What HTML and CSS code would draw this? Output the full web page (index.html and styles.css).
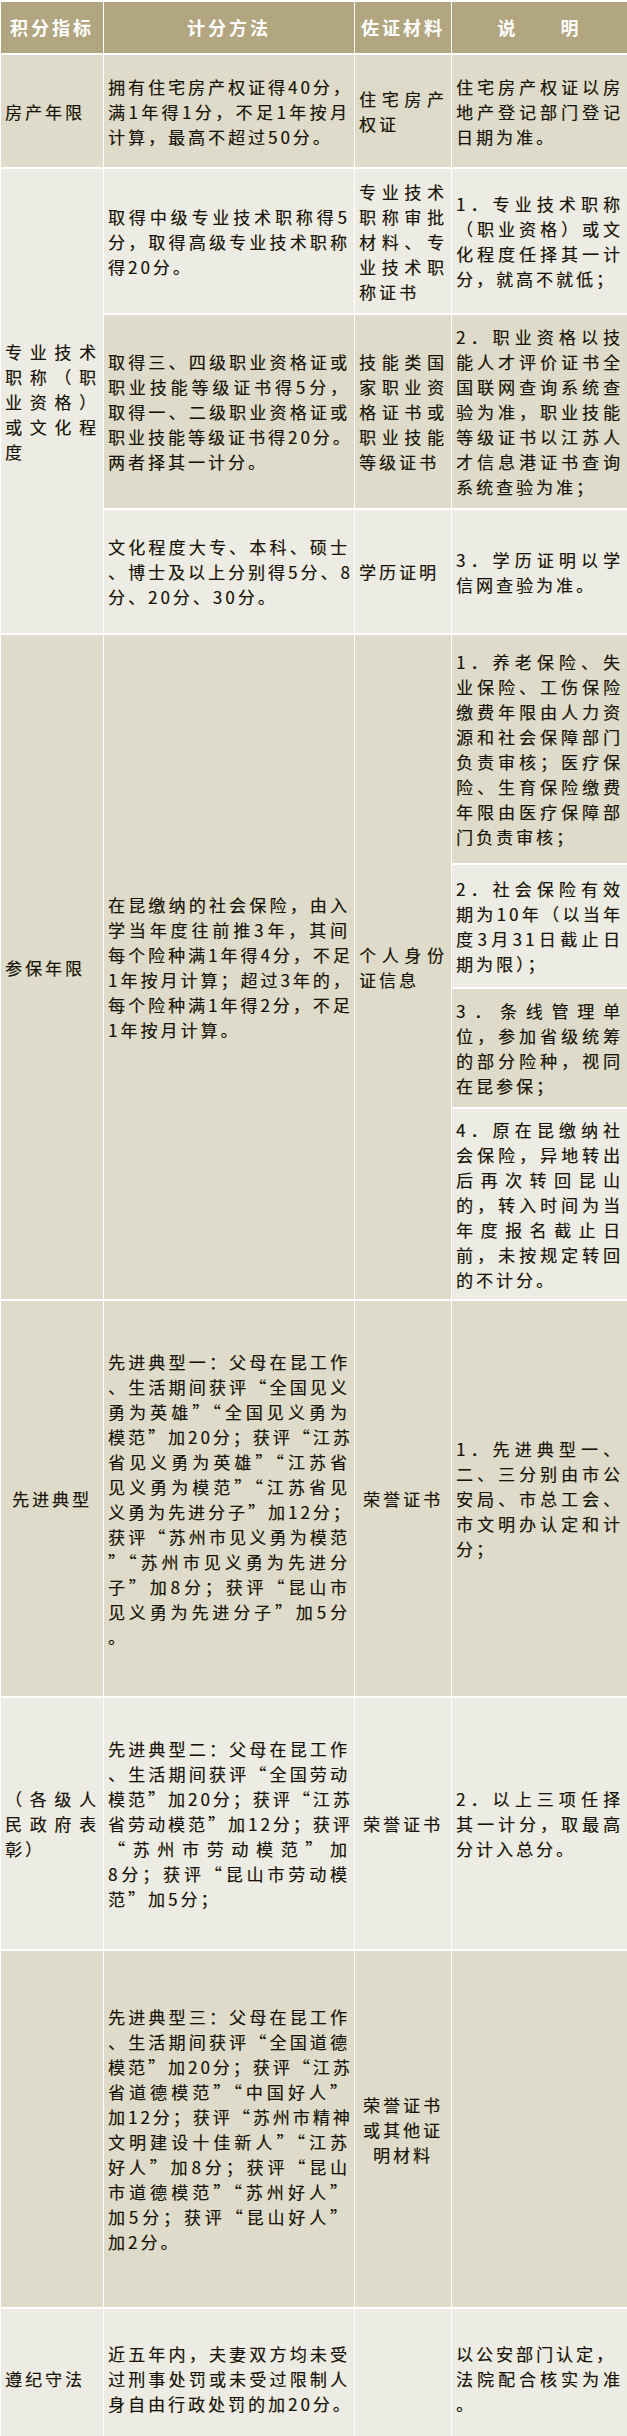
FILE: index.html
```html
<!DOCTYPE html>
<html lang="zh-CN">
<head>
<meta charset="utf-8">
<title>积分指标</title>
<link rel="stylesheet" href="styles.css">
</head>
<body>
<table class="score">
  <colgroup><col class="c1"><col class="c2"><col class="c3"><col class="c4"></colgroup>
  <thead>
    <tr class="r-head"><th>积分指标</th><th>计分方法</th><th>佐证材料</th><th>说　　明</th></tr>
  </thead>
  <tbody>
    <tr class="r-house dark">
      <td><span class="l e">房产年限</span></td>
      <td><span class="l">拥有住宅房产权证得40分，</span><span class="l">满1年得1分，不足1年按月</span><span class="l e">计算，最高不超过50分。</span></td>
      <td><span class="l">住宅房产</span><span class="l e">权证</span></td>
      <td><span class="l">住宅房产权证以房</span><span class="l">地产登记部门登记</span><span class="l e">日期为准。</span></td>
    </tr>
    <tr class="r-pro1">
      <td rowspan="3" class="light"><span class="l">专业技术</span><span class="l">职称（职</span><span class="l">业资格）</span><span class="l">或文化程</span><span class="l e">度</span></td>
      <td class="light"><span class="l">取得中级专业技术职称得5</span><span class="l">分，取得高级专业技术职称</span><span class="l e">得20分。</span></td>
      <td class="light"><span class="l">专业技术</span><span class="l">职称审批</span><span class="l">材料、专</span><span class="l">业技术职</span><span class="l e">称证书</span></td>
      <td class="light"><span class="l">1．专业技术职称</span><span class="l">（职业资格）或文</span><span class="l">化程度任择其一计</span><span class="l e">分，就高不就低；</span></td>
    </tr>
    <tr class="r-pro2 dark">
      <td><span class="l">取得三、四级职业资格证或</span><span class="l">职业技能等级证书得5分，</span><span class="l">取得一、二级职业资格证或</span><span class="l">职业技能等级证书得20分。</span><span class="l e">两者择其一计分。</span></td>
      <td><span class="l">技能类国</span><span class="l">家职业资</span><span class="l">格证书或</span><span class="l">职业技能</span><span class="l e">等级证书</span></td>
      <td><span class="l">2．职业资格以技</span><span class="l">能人才评价证书全</span><span class="l">国联网查询系统查</span><span class="l">验为准，职业技能</span><span class="l">等级证书以江苏人</span><span class="l">才信息港证书查询</span><span class="l e">系统查验为准；</span></td>
    </tr>
    <tr class="r-pro3 light">
      <td><span class="l">文化程度大专、本科、硕士</span><span class="l">、博士及以上分别得5分、8</span><span class="l e">分、20分、30分。</span></td>
      <td><span class="l e">学历证明</span></td>
      <td><span class="l">3．学历证明以学</span><span class="l e">信网查验为准。</span></td>
    </tr>
    <tr class="r-ins1">
      <td rowspan="4" class="dark"><span class="l e">参保年限</span></td>
      <td rowspan="4" class="dark"><span class="l">在昆缴纳的社会保险，由入</span><span class="l">学当年度往前推3年，其间</span><span class="l">每个险种满1年得4分，不足</span><span class="l">1年按月计算；超过3年的，</span><span class="l">每个险种满1年得2分，不足</span><span class="l e">1年按月计算。</span></td>
      <td rowspan="4" class="dark"><span class="l">个人身份</span><span class="l e">证信息</span></td>
      <td class="dark"><span class="l">1．养老保险、失</span><span class="l">业保险、工伤保险</span><span class="l">缴费年限由人力资</span><span class="l">源和社会保障部门</span><span class="l">负责审核；医疗保</span><span class="l">险、生育保险缴费</span><span class="l">年限由医疗保障部</span><span class="l e">门负责审核；</span></td>
    </tr>
    <tr class="r-ins2">
      <td class="light"><span class="l">2．社会保险有效</span><span class="l">期为10年（以当年</span><span class="l">度3月31日截止日</span><span class="l e">期为限）；</span></td>
    </tr>
    <tr class="r-ins3">
      <td class="dark"><span class="l">3．条线管理单</span><span class="l">位，参加省级统筹</span><span class="l">的部分险种，视同</span><span class="l e">在昆参保；</span></td>
    </tr>
    <tr class="r-ins4">
      <td class="light"><span class="l">4．原在昆缴纳社</span><span class="l">会保险，异地转出</span><span class="l">后再次转回昆山</span><span class="l">的，转入时间为当</span><span class="l">年度报名截止日</span><span class="l">前，未按规定转回</span><span class="l e">的不计分。</span></td>
    </tr>
    <tr class="r-adv1 dark">
      <td class="ctr"><span class="l e">先进典型</span></td>
      <td><span class="l">先进典型一：父母在昆工作</span><span class="l">、生活期间获评“全国见义</span><span class="l">勇为英雄”“全国见义勇为</span><span class="l">模范”加20分；获评“江苏</span><span class="l">省见义勇为英雄”“江苏省</span><span class="l">见义勇为模范”“江苏省见</span><span class="l">义勇为先进分子”加12分；</span><span class="l">获评“苏州市见义勇为模范</span><span class="l">”“苏州市见义勇为先进分</span><span class="l">子”加8分；获评“昆山市</span><span class="l">见义勇为先进分子”加5分</span><span class="l e">。</span></td>
      <td class="ctr"><span class="l e">荣誉证书</span></td>
      <td><span class="l">1．先进典型一、</span><span class="l">二、三分别由市公</span><span class="l">安局、市总工会、</span><span class="l">市文明办认定和计</span><span class="l e">分；</span></td>
    </tr>
    <tr class="r-adv2 light">
      <td><span class="l">（各级人</span><span class="l">民政府表</span><span class="l e">彰）</span></td>
      <td><span class="l">先进典型二：父母在昆工作</span><span class="l">、生活期间获评“全国劳动</span><span class="l">模范”加20分；获评“江苏</span><span class="l">省劳动模范”加12分；获评</span><span class="l">“苏州市劳动模范”加</span><span class="l">8分；获评“昆山市劳动模</span><span class="l e">范”加5分；</span></td>
      <td class="ctr"><span class="l e">荣誉证书</span></td>
      <td><span class="l">2．以上三项任择</span><span class="l">其一计分，取最高</span><span class="l e">分计入总分。</span></td>
    </tr>
    <tr class="r-adv3 dark">
      <td></td>
      <td><span class="l">先进典型三：父母在昆工作</span><span class="l">、生活期间获评“全国道德</span><span class="l">模范”加20分；获评“江苏</span><span class="l">省道德模范”“中国好人”</span><span class="l">加12分；获评“苏州市精神</span><span class="l">文明建设十佳新人”“江苏</span><span class="l">好人”加8分；获评“昆山</span><span class="l">市道德模范”“苏州好人”</span><span class="l">加5分；获评“昆山好人”</span><span class="l e">加2分。</span></td>
      <td class="ctr"><span class="l e">荣誉证书</span><span class="l e">或其他证</span><span class="l e">明材料</span></td>
      <td></td>
    </tr>
    <tr class="r-law light">
      <td><span class="l e">遵纪守法</span></td>
      <td><span class="l">近五年内，夫妻双方均未受</span><span class="l">过刑事处罚或未受过限制人</span><span class="l e">身自由行政处罚的加20分。</span></td>
      <td></td>
      <td><span class="l e">以公安部门认定，</span><span class="l">法院配合核实为准</span><span class="l e">。</span></td>
    </tr>
  </tbody>
</table>
</body>
</html>
```
FILE: styles.css
```css
html, body {
  margin: 0;
  padding: 0;
  background: #ffffff;
}

body {
  font-family: "Noto Sans CJK SC", "Liberation Sans", sans-serif;
  font-size: 17px;
  line-height: 25px;
  letter-spacing: 3px;
  color: #15130c;
}

.score {
  border-collapse: collapse;
  table-layout: fixed;
  width: 627px;
}

.c1 { width: 103px; }
.c2 { width: 251px; }
.c3 { width: 97px; }
.c4 { width: 176px; }

.score th,
.score td {
  border-top: 2px solid #ffffff;
  border-bottom: 2px solid #ffffff;
  border-left: 1px solid #ffffff;
  border-right: 1px solid #ffffff;
  padding: 0 4px;
  vertical-align: middle;
  text-align: left;
}

.score td {
  text-shadow: 0.4px 0.4px 0 rgba(110, 95, 30, 0.55);
}

.score th {
  background: #b2a681;
  color: #ffffff;
  font-size: 18px;
  font-weight: 700;
  text-align: center;
  white-space: nowrap;
}

.dark > td,
td.dark { background: #dedbca; }
.light > td,
td.light { background: #edece4; }

.l {
  display: block;
  white-space: nowrap;
  text-align: justify;
  text-align-last: justify;
}

.l.e {
  text-align: left;
  text-align-last: left;
}

.ctr .l,
.ctr .l.e {
  text-align: center;
  text-align-last: center;
}

.r-head { height: 53px; }
.r-house { height: 114px; }
.r-pro1 { height: 146px; }
.r-pro2 { height: 195px; }
.r-pro3 { height: 125px; }
.r-ins1 { height: 230px; }
.r-ins2 { height: 124px; }
.r-ins3 { height: 120px; }
.r-ins4 { height: 192px; }
.r-adv1 { height: 397px; }
.r-adv2 { height: 253px; }
.r-adv3 { height: 358px; }
.r-law { height: 140px; }
```
